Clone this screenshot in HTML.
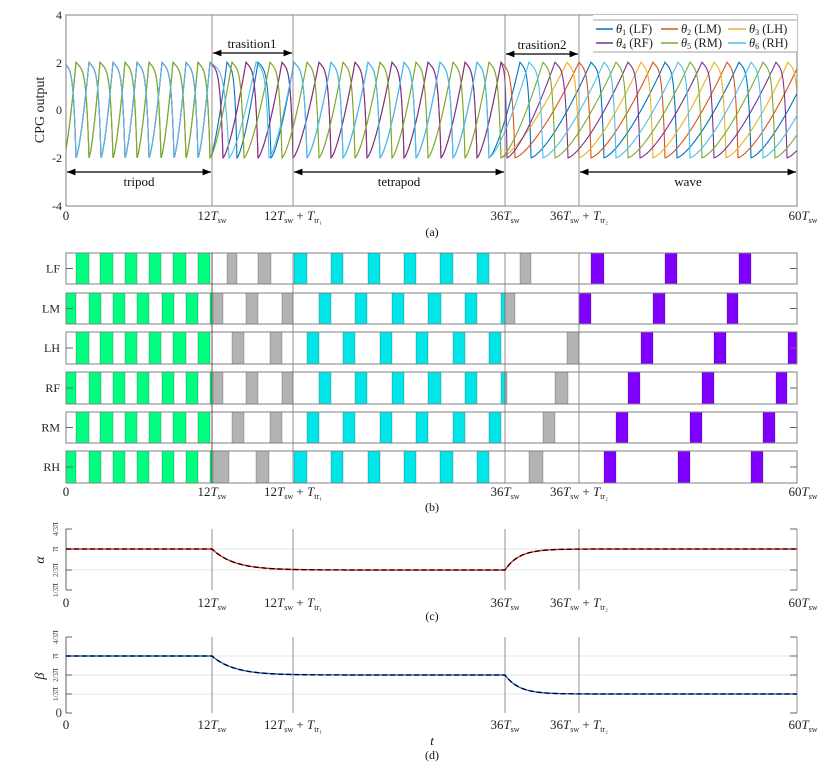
<!DOCTYPE html>
<html><head><meta charset="utf-8">
<style>
html,body{margin:0;padding:0;background:#fff;}
svg{display:block;font-family:"Liberation Serif",serif;}
</style></head>
<body>
<svg id="s" width="830" height="767" viewBox="0 0 830 767" xmlns="http://www.w3.org/2000/svg">
<defs>
<marker id="ar" viewBox="0 0 10 10" refX="10" refY="5" markerWidth="7" markerHeight="7" orient="auto-start-reverse"><path d="M0,1 L10,5 L0,9 z" fill="#000"/></marker>
</defs>
<g id="a"></g>
<rect x="66" y="15" width="731" height="191" fill="none" stroke="#808080" stroke-width="1"/>
<g stroke="#777" stroke-width="0.8">
<line x1="212" y1="15" x2="212" y2="206"/><line x1="293" y1="15" x2="293" y2="206"/>
<line x1="505" y1="15" x2="505" y2="206"/><line x1="579" y1="15" x2="579" y2="206"/>
</g>
<g font-size="12" text-anchor="end" fill="#222">
<text x="62" y="19">4</text><text x="62" y="67">2</text><text x="62" y="114">0</text><text x="62" y="162">-2</text><text x="62" y="210">-4</text>
</g>
<text transform="translate(44,110) rotate(-90)" text-anchor="middle" font-size="14" fill="#222">CPG output</text>
<g>
<rect x="593" y="15" width="204" height="37" fill="#fff" stroke="none"/>
<line x1="593" y1="52" x2="797" y2="52" stroke="#808080" stroke-width="0.8"/>
<line x1="593" y1="20" x2="797" y2="20" stroke="#808080" stroke-width="0.8"/>
<g stroke-width="1.5">
<line x1="596" y1="29" x2="613" y2="29" stroke="#0072BD"/>
<line x1="661" y1="29" x2="678" y2="29" stroke="#D95319"/>
<line x1="728" y1="29" x2="746" y2="29" stroke="#EDB120"/>
<line x1="596" y1="43" x2="613" y2="43" stroke="#7E2F8E"/>
<line x1="661" y1="43" x2="678" y2="43" stroke="#77AC30"/>
<line x1="728" y1="43" x2="746" y2="43" stroke="#4DBEEE"/>
</g>
<g font-size="12.5" fill="#222">
<text x="616" y="33"><tspan font-style="italic">θ</tspan><tspan font-size="8" dy="2">1</tspan><tspan dy="-2"> (LF)</tspan></text>
<text x="681" y="33"><tspan font-style="italic">θ</tspan><tspan font-size="8" dy="2">2</tspan><tspan dy="-2"> (LM)</tspan></text>
<text x="749" y="33"><tspan font-style="italic">θ</tspan><tspan font-size="8" dy="2">3</tspan><tspan dy="-2"> (LH)</tspan></text>
<text x="616" y="47"><tspan font-style="italic">θ</tspan><tspan font-size="8" dy="2">4</tspan><tspan dy="-2"> (RF)</tspan></text>
<text x="681" y="47"><tspan font-style="italic">θ</tspan><tspan font-size="8" dy="2">5</tspan><tspan dy="-2"> (RM)</tspan></text>
<text x="749" y="47"><tspan font-style="italic">θ</tspan><tspan font-size="8" dy="2">6</tspan><tspan dy="-2"> (RH)</tspan></text>
</g>
</g>
<g stroke="#000" stroke-width="1.2" marker-start="url(#ar)" marker-end="url(#ar)">
<line x1="67" y1="172" x2="211" y2="172"/>
<line x1="213" y1="53" x2="292" y2="53"/>
<line x1="294" y1="172" x2="504" y2="172"/>
<line x1="506" y1="54" x2="578" y2="54"/>
<line x1="580" y1="172" x2="796" y2="172"/>
</g>
<g font-size="13" text-anchor="middle" fill="#111">
<text x="139" y="186">tripod</text>
<text x="252" y="48">trasition1</text>
<text x="399" y="186">tetrapod</text>
<text x="542" y="49">trasition2</text>
<text x="688" y="186">wave</text>
</g>
<g id="xt"></g>
<g font-size="12" text-anchor="middle" fill="#111">
<text x="432" y="236">(a)</text>
<text x="432" y="511">(b)</text>
<text x="432" y="620">(c)</text>
<text x="432" y="759">(d)</text>
<text x="432" y="745" font-style="italic" font-size="13">t</text>
</g>
<g id="b"></g>
<g id="c"></g>
</svg>
<script>
var NS="http://www.w3.org/2000/svg";
function el(p,t,a,txt){var e=document.createElementNS(NS,t);for(var k in a)e.setAttribute(k,a[k]);if(txt)e.textContent=txt;p.appendChild(e);return e;}
var G=[[76,89],[100,113],[125,137],[149,161],[173,186],[198,210]];
var G2=[[66,76],[89,101],[113,125],[137,149],[162,174],[186,198],[210,212]];
var C1=[[294,307],[331,343],[368,380],[404,416],[440,453],[477,489]];
var C2=[[319,331],[355,367],[392,404],[428,441],[465,477],[501,505]];
var C3=[[307,319],[343,355],[380,392],[416,428],[453,465],[489,501]];
var legs=[
 {n:"LF",g:G,gr:[[227,237],[258,271]],c:C1,gr2:[[520,531]],p:[[591,604],[665,677],[739,751]]},
 {n:"LM",g:G2,gr:[[213,223],[246,258],[282,293]],c:C2,gr2:[[505,515]],p:[[579,591],[653,665],[727,738]]},
 {n:"LH",g:G,gr:[[232,244],[270,282]],c:C3,gr2:[[567,579]],p:[[641,653],[714,726],[788,797]]},
 {n:"RF",g:G2,gr:[[213,223],[246,258],[282,293]],c:C2,gr2:[[505,507],[555,568]],p:[[628,640],[702,714],[776,787]]},
 {n:"RM",g:G,gr:[[232,244],[270,282]],c:C3,gr2:[[543,555]],p:[[616,628],[690,702],[763,775]]},
 {n:"RH",g:G2,gr:[[213,229],[256,269]],c:C1,gr2:[[529,543]],p:[[604,616],[678,690],[751,763]]}];
var rows=[[253,284],[293,324],[332,364],[372,404],[412,443],[451,483]];
var b=document.getElementById("b");
legs.forEach(function(L,i){
 var y0=rows[i][0],y1=rows[i][1];
 var sets=[[L.g,"#00ff80"],[L.gr,"#b3b3b3"],[L.c,"#00e5e8"],[L.gr2,"#b3b3b3"],[L.p,"#8000ff"]];
 sets.forEach(function(s){s[0].forEach(function(r){el(b,"rect",{x:r[0],y:y0,width:r[1]-r[0],height:y1-y0,fill:s[1],stroke:"rgba(0,0,0,0.35)","stroke-width":0.6});});});
 el(b,"rect",{x:66,y:y0,width:731,height:y1-y0,fill:"none",stroke:"#808080","stroke-width":1});
 var m=(y0+y1)/2;
 el(b,"line",{x1:66,y1:m,x2:73,y2:m,stroke:"#666"});
 el(b,"line",{x1:790,y1:m,x2:797,y2:m,stroke:"#666"});
 el(b,"text",{x:60,y:m+4,"text-anchor":"end","font-size":12,fill:"#222"},L.n);
});
[212,293,505,579].forEach(function(x){el(b,"line",{x1:x,y1:253,x2:x,y2:483,stroke:x==212?"#333":"#777","stroke-width":0.8});});
var cols=["#0072BD","#D95319","#EDB120","#7E2F8E","#77AC30","#4DBEEE"];
var a=document.getElementById("a");
function yv(v){return 110-v*23.9;}
legs.forEach(function(L,i){
 var sw=[].concat(L.g,L.gr,L.c,L.gr2,L.p).map(function(r){return r.slice();}).sort(function(p,q){return p[0]-q[0];});
 var m=[];sw.forEach(function(r){if(m.length&&r[0]-m[m.length-1][1]<2){m[m.length-1][1]=Math.max(m[m.length-1][1],r[1]);}else m.push(r);});
 if(m[0][0]<=66)m[0][0]=64;
 m.unshift([m[0][0]-24.4,m[0][0]-12.2]);
 var last=m[m.length-1];if(last[1]>=797)last[1]=last[0]+12;
 m.push([last[0]+73,last[0]+85]);
 var d="";
 for(var x=66;x<=797;x+=0.5){
  var v=null;
  for(var k=0;k<m.length;k++){
   if(x>=m[k][0]&&x<=m[k][1]){var u=(x-m[k][0])/(m[k][1]-m[k][0]);v=2-0.6*u-3.4*Math.pow(u,5);break;}
   if(k+1<m.length&&x>m[k][1]&&x<m[k+1][0]){var u=(x-m[k][1])/(m[k+1][0]-m[k][1]);v=-2+4*Math.pow(u,1.4);break;}
  }
  if(v===null)v=0;
  d+=(d?"L":"M")+x.toFixed(1)+","+yv(v).toFixed(1);
 }
 el(a,"path",{d:d,fill:"none",stroke:cols[i],"stroke-width":1.1});
});
var xt=document.getElementById("xt");
function xlabels(y){
 el(xt,"text",{x:66,y:y,"text-anchor":"middle","font-size":13,fill:"#222"},"0");
 var t;
 t=el(xt,"text",{x:212,y:y,"text-anchor":"middle","font-size":13,fill:"#222"});t.innerHTML='12<tspan font-style="italic">T</tspan><tspan font-size="8" dy="3">sw</tspan>';
 t=el(xt,"text",{x:293,y:y,"text-anchor":"middle","font-size":13,fill:"#222"});t.innerHTML='12<tspan font-style="italic">T</tspan><tspan font-size="8" dy="3">sw</tspan><tspan dy="-3"> + </tspan><tspan font-style="italic">T</tspan><tspan font-size="8" dy="3">tr₁</tspan>';
 t=el(xt,"text",{x:505,y:y,"text-anchor":"middle","font-size":13,fill:"#222"});t.innerHTML='36<tspan font-style="italic">T</tspan><tspan font-size="8" dy="3">sw</tspan>';
 t=el(xt,"text",{x:579,y:y,"text-anchor":"middle","font-size":13,fill:"#222"});t.innerHTML='36<tspan font-style="italic">T</tspan><tspan font-size="8" dy="3">sw</tspan><tspan dy="-3"> + </tspan><tspan font-style="italic">T</tspan><tspan font-size="8" dy="3">tr₂</tspan>';
 t=el(xt,"text",{x:803,y:y,"text-anchor":"middle","font-size":13,fill:"#222"});t.innerHTML='60<tspan font-style="italic">T</tspan><tspan font-size="8" dy="3">sw</tspan>';
}
xlabels(220);xlabels(496);xlabels(607);xlabels(729);
var c=document.getElementById("c");
function panel(top,bot,ticks,grid,fn,col,lab,labY){
 grid.forEach(function(y){el(c,"line",{x1:66,y1:y,x2:797,y2:y,stroke:"#e6e6e6","stroke-width":1});});
 el(c,"line",{x1:66,y1:top,x2:66,y2:bot,stroke:"#666"});
 [212,293,505,579,797].forEach(function(x){el(c,"line",{x1:x,y1:top,x2:x,y2:bot,stroke:"#777","stroke-width":0.8});});
 ticks.forEach(function(tk){
  el(c,"line",{x1:66,y1:tk[0],x2:72,y2:tk[0],stroke:"#666"});
  el(c,"line",{x1:790,y1:tk[0],x2:797,y2:tk[0],stroke:"#666"});
  if(tk[1]=="0"){el(c,"text",{x:62,y:tk[0]+4,"text-anchor":"end","font-size":13,fill:"#444"},"0");}
  else{var t=el(c,"text",{transform:"translate(58,"+tk[0]+") rotate(-90)","text-anchor":"middle","font-size":10,fill:"#444"});t.innerHTML=tk[1];}
 });
 var d="";for(var x=66;x<=797;x+=1){d+=(d?"L":"M")+x+","+fn(x).toFixed(1);}
 el(c,"path",{d:d,fill:"none",stroke:col,"stroke-width":1.4});
 el(c,"path",{d:d,fill:"none",stroke:"#000","stroke-width":1.3,"stroke-dasharray":"5,3"});
 el(c,"text",{transform:"translate(44,"+labY+") rotate(-90)","text-anchor":"middle","font-size":14,"font-style":"italic",fill:"#222"},lab);
}
var fr=function(n){return '<tspan font-size="7">'+n+'/3</tspan>π';};
panel(529,590,[[529,fr(4)],[549,"π"],[570,fr(2)],[590,fr(1)]],[549,570],function(x){
 if(x<212)return 549; if(x<505)return 549+21*(1-Math.exp(-(x-212)/22)); return 570-21*(1-Math.exp(-(x-505)/14));},"#ff2020","α",560);
panel(637,713,[[637,fr(4)],[656,"π"],[675,fr(2)],[694,fr(1)],[713,"0"]],[656,675,694],function(x){
 if(x<212)return 656; if(x<505)return 656+19*(1-Math.exp(-(x-212)/22)); return 675+19*(1-Math.exp(-(x-505)/14));},"#1a6cff","β",676);
</script>
</body></html>
